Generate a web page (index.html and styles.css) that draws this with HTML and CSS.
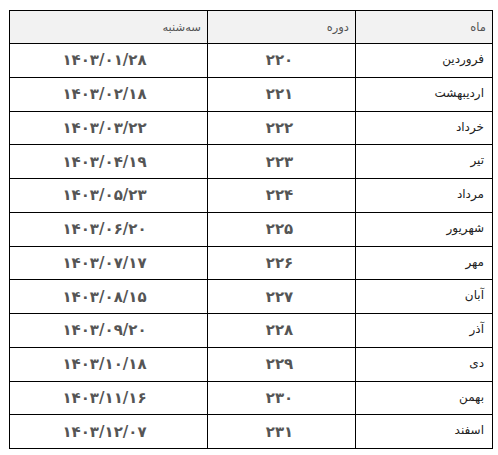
FILE: index.html
```html
<!DOCTYPE html>
<html lang="fa">
<head>
<meta charset="utf-8">
<link rel="stylesheet" href="styles.css">
</head>
<body>
<table class="cal" dir="rtl">
  <colgroup>
    <col class="c-month">
    <col class="c-period">
    <col class="c-date">
  </colgroup>
  <thead>
    <tr class="head">
      <th>ماه</th>
      <th>دوره</th>
      <th>سه‌شنبه</th>
    </tr>
  </thead>
  <tbody>
    <tr><td class="m">فروردین</td><td class="p">۲۲۰</td><td class="d">۱۴۰۳/۰۱/۲۸</td></tr>
    <tr><td class="m">اردیبهشت</td><td class="p">۲۲۱</td><td class="d">۱۴۰۳/۰۲/۱۸</td></tr>
    <tr><td class="m">خرداد</td><td class="p">۲۲۲</td><td class="d">۱۴۰۳/۰۳/۲۲</td></tr>
    <tr><td class="m">تیر</td><td class="p">۲۲۳</td><td class="d">۱۴۰۳/۰۴/۱۹</td></tr>
    <tr><td class="m">مرداد</td><td class="p">۲۲۴</td><td class="d">۱۴۰۳/۰۵/۲۳</td></tr>
    <tr><td class="m">شهریور</td><td class="p">۲۲۵</td><td class="d">۱۴۰۳/۰۶/۲۰</td></tr>
    <tr><td class="m">مهر</td><td class="p">۲۲۶</td><td class="d">۱۴۰۳/۰۷/۱۷</td></tr>
    <tr><td class="m">آبان</td><td class="p">۲۲۷</td><td class="d">۱۴۰۳/۰۸/۱۵</td></tr>
    <tr><td class="m">آذر</td><td class="p">۲۲۸</td><td class="d">۱۴۰۳/۰۹/۲۰</td></tr>
    <tr><td class="m">دی</td><td class="p">۲۲۹</td><td class="d">۱۴۰۳/۱۰/۱۸</td></tr>
    <tr><td class="m">بهمن</td><td class="p">۲۳۰</td><td class="d">۱۴۰۳/۱۱/۱۶</td></tr>
    <tr><td class="m">اسفند</td><td class="p">۲۳۱</td><td class="d">۱۴۰۳/۱۲/۰۷</td></tr>
  </tbody>
</table>
</body>
</html>
```
FILE: styles.css
```css
html, body {
  margin: 0;
  padding: 0;
  background: #ffffff;
}
body {
  padding: 10px 0 0 9px;
  font-family: "DejaVu Sans", "Noto Sans", sans-serif;
}
.cal {
  border-collapse: collapse;
  width: 483px;
  table-layout: fixed;
  direction: rtl;
}
.c-month { width: 137px; }
.c-period { width: 148px; }
.c-date { width: 198px; }
.cal tr.head { height: 33px; }
.cal tbody tr { height: 33.75px; }
.cal th,
.cal td {
  border: 1px solid #000;
  padding: 0;
  line-height: 16px;
}
.cal th {
  background: #f2f2f2;
  color: #555;
  font-size: 11.5px;
  font-weight: normal;
  text-align: right;
  vertical-align: top;
  padding-right: 6px;
  padding-top: 8px;
}
.cal td.m {
  text-align: right;
  vertical-align: top;
  padding-right: 8px;
  padding-top: 7px;
  font-size: 12px;
  color: #222;
}
.cal td.p,
.cal td.d {
  text-align: center;
  vertical-align: middle;
  font-size: 15px;
  font-weight: bold;
  color: #555;
}
.cal td.d {
  letter-spacing: 3px;
  padding-right: 8px;
}
.cal td.p {
  letter-spacing: 2px;
  padding-right: 4px;
}
```
